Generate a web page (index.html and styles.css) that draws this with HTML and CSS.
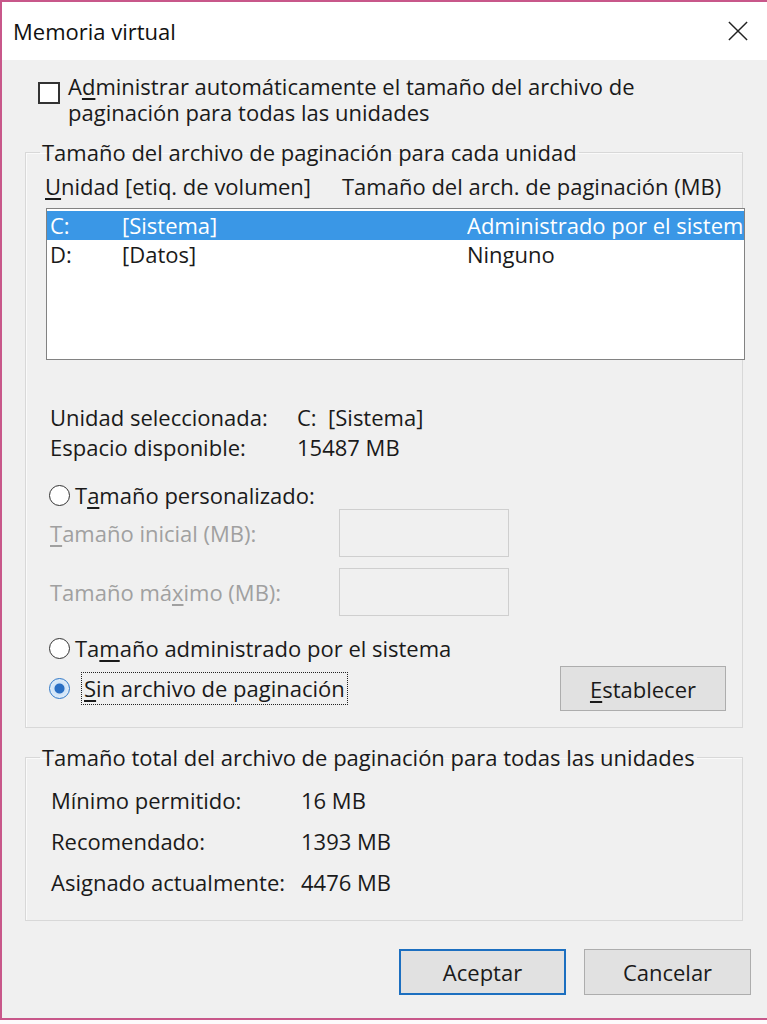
FILE: index.html
```html
<!DOCTYPE html>
<html lang="es">
<head>
<meta charset="utf-8">
<title>Memoria virtual</title>
<link rel="stylesheet" href="styles.css">
</head>
<body>
<div class="window">
  <div class="titlebar">
    <span class="title">Memoria virtual</span>
    <svg class="close" viewBox="0 0 22 22" aria-label="Cerrar"><path d="M1 1 L21 21 M21 1 L1 21" stroke="#222" stroke-width="1.6" fill="none"/></svg>
  </div>
  <div class="content">
    <div class="check-row">
      <span class="checkbox"></span>
      <span class="check-label"><span class="cl-line">A<u>d</u>ministrar automáticamente el tamaño del archivo de</span><span class="cl-line">paginación para todas las unidades</span></span>
    </div>

    <fieldset class="group group-drives">
      <legend>Tamaño del archivo de paginación para cada unidad</legend>
      <div class="cols">
        <span class="col-head-a"><u>U</u>nidad [etiq. de volumen]</span>
        <span class="col-head-b">Tamaño del arch. de paginación (MB)</span>
      </div>
      <div class="listbox">
        <div class="lrow selected"><span class="c1">C:</span><span class="c2">[Sistema]</span><span class="c3">Administrado por el sistema</span></div>
        <div class="lrow"><span class="c1">D:</span><span class="c2">[Datos]</span><span class="c3">Ninguno</span></div>
      </div>
      <div class="info">
        <div class="info-row"><span class="info-label">Unidad seleccionada:</span><span>C:&nbsp; [Sistema]</span></div>
        <div class="info-row"><span class="info-label">Espacio disponible:</span><span>15487 MB</span></div>
      </div>
      <div class="radio-row r-custom"><span class="radio"></span><span class="radio-text">T<u>a</u>maño personalizado:</span></div>
      <div class="field-row f-first"><span class="field-label disabled"><u>T</u>amaño inicial (MB):</span><span class="textbox"></span></div>
      <div class="field-row f-second"><span class="field-label disabled">Tamaño má<u>x</u>imo (MB):</span><span class="textbox"></span></div>
      <div class="radio-row r-system"><span class="radio"></span><span class="radio-text">Ta<u>m</u>año administrado por el sistema</span></div>
      <div class="set-row">
        <div class="radio-wrap"><span class="radio checked"></span><span class="focus-text"><u>S</u>in archivo de paginación</span></div>
        <button class="btn btn-set"><u>E</u>stablecer</button>
      </div>
    </fieldset>

    <fieldset class="group group-total">
      <legend>Tamaño total del archivo de paginación para todas las unidades</legend>
      <div class="total-row"><span class="total-label">Mínimo permitido:</span><span>16 MB</span></div>
      <div class="total-row"><span class="total-label">Recomendado:</span><span>1393 MB</span></div>
      <div class="total-row"><span class="total-label">Asignado actualmente:</span><span>4476 MB</span></div>
    </fieldset>

    <div class="buttons">
      <button class="btn btn-default">Aceptar</button>
      <button class="btn">Cancelar</button>
    </div>
  </div>
</div>
</body>
</html>
```

FILE: styles.css
```css
* { box-sizing: border-box; }
html, body { margin: 0; padding: 0; background: #fdfbfc; }
body {
  font-family: "Open Sans", "Noto Sans", sans-serif;
  font-size: 22px;
  color: #1a1a1a;
}
u { text-decoration-thickness: 1.5px; text-underline-offset: 3px; }

.window {
  width: 767px;
  height: 1020px;
  border: 2px solid #c8578a;
  border-right: none;
  background: #f0f0f0;
  display: flex;
  flex-direction: column;
}

.titlebar {
  height: 58px;
  flex: none;
  background: #ffffff;
  display: flex;
  align-items: center;
  justify-content: space-between;
  padding: 0 19px 0 11px;
}
.title { font-size: 22px; color: #111; }
.close { width: 20px; height: 20px; }

.content {
  flex: 1;
  padding: 13px 16px 0 23px;
  display: flex;
  flex-direction: column;
}

.check-row { display: flex; align-items: flex-start; }
.checkbox {
  flex: none;
  width: 22px;
  height: 22px;
  margin: 9px 0 0 13px;
  border: 2px solid #333;
  background: #fff;
}
.check-label { margin-left: 8px; display: flex; flex-direction: column; }
.cl-line { display: block; height: 26px; line-height: 26px; white-space: nowrap; }

.group {
  margin: 0 8px 0 0;
  min-width: 0;
  border: 1px solid #d8d8d8;
  box-shadow: inset 1px 1px 0 #fafafa;
  padding: 8px 16px 16px 14px;
}
.group legend {
  padding: 0 2px;
  line-height: 26px;
}
.group-drives { margin-top: 14px; }
.group-total { margin-top: 16px; padding-top: 10px; padding-bottom: 17px; }

.cols { display: flex; line-height: 26px; padding-left: 5px; white-space: nowrap; }
.col-head-a { width: 297px; flex: none; }

.listbox {
  margin: 9px -19px 0 6px;
  height: 152px;
  border: 1px solid #828282;
  background: #fff;
  padding-top: 2px;
}
.lrow {
  display: flex;
  height: 29px;
  line-height: 29px;
  padding-left: 3px;
  white-space: nowrap;
  overflow: hidden;
}
.lrow.selected { background: #3a97e6; color: #fff; }
.c1 { width: 72px; flex: none; }
.c2 { width: 345px; flex: none; }
.c3 { flex: 1; overflow: hidden; }

.info { margin-top: 42px; padding-left: 10px; }
.info-row { display: flex; line-height: 30px; }
.info-label { width: 247px; flex: none; }

.radio-row { display: flex; align-items: center; height: 26px; padding-left: 9px; }
.r-custom { margin-top: 20px; }
.r-system { margin-top: 19px; }
.radio {
  flex: none;
  width: 21px;
  height: 21px;
  border-radius: 50%;
  border: 1.5px solid #333;
  background: #fff;
}
.radio.checked {
  border-color: #2f78c8;
  background: radial-gradient(circle, #2a6fc4 0 4.5px, #cfe3f7 5.5px, #eef5fc 100%);
}
.radio-text { margin-left: 5px; }

.field-row { display: flex; align-items: center; height: 48px; padding-left: 10px; }
.f-first { margin-top: 1px; }
.f-second { margin-top: 11px; }
.field-label { width: 289px; flex: none; }
.disabled { color: #a0a0a0; }
.textbox {
  width: 170px;
  height: 48px;
  border: 1px solid #cfcfcf;
  background: #f0f0f0;
}

.set-row {
  display: flex;
  align-items: center;
  justify-content: space-between;
  height: 45px;
  margin-top: 5px;
  padding-left: 9px;
}
.radio-wrap { display: flex; align-items: center; }
.focus-text {
  margin-left: 11px;
  height: 33px;
  line-height: 31px;
  padding: 0 2px;
  border: 1px dotted #222;
}

.btn {
  font: inherit;
  color: #1a1a1a;
  background: #e1e1e1;
  border: 1px solid #adadad;
  padding: 0;
  margin: 0;
}
.btn-set { width: 166px; height: 45px; }

.total-row { display: flex; line-height: 41px; padding-left: 11px; }
.total-label { width: 250px; flex: none; }

.buttons {
  display: flex;
  justify-content: flex-end;
  gap: 18px;
  margin-top: 28px;
}
.buttons .btn { width: 167px; height: 46px; }
.btn-default { border: 2px solid #1c6fc0; }
```
